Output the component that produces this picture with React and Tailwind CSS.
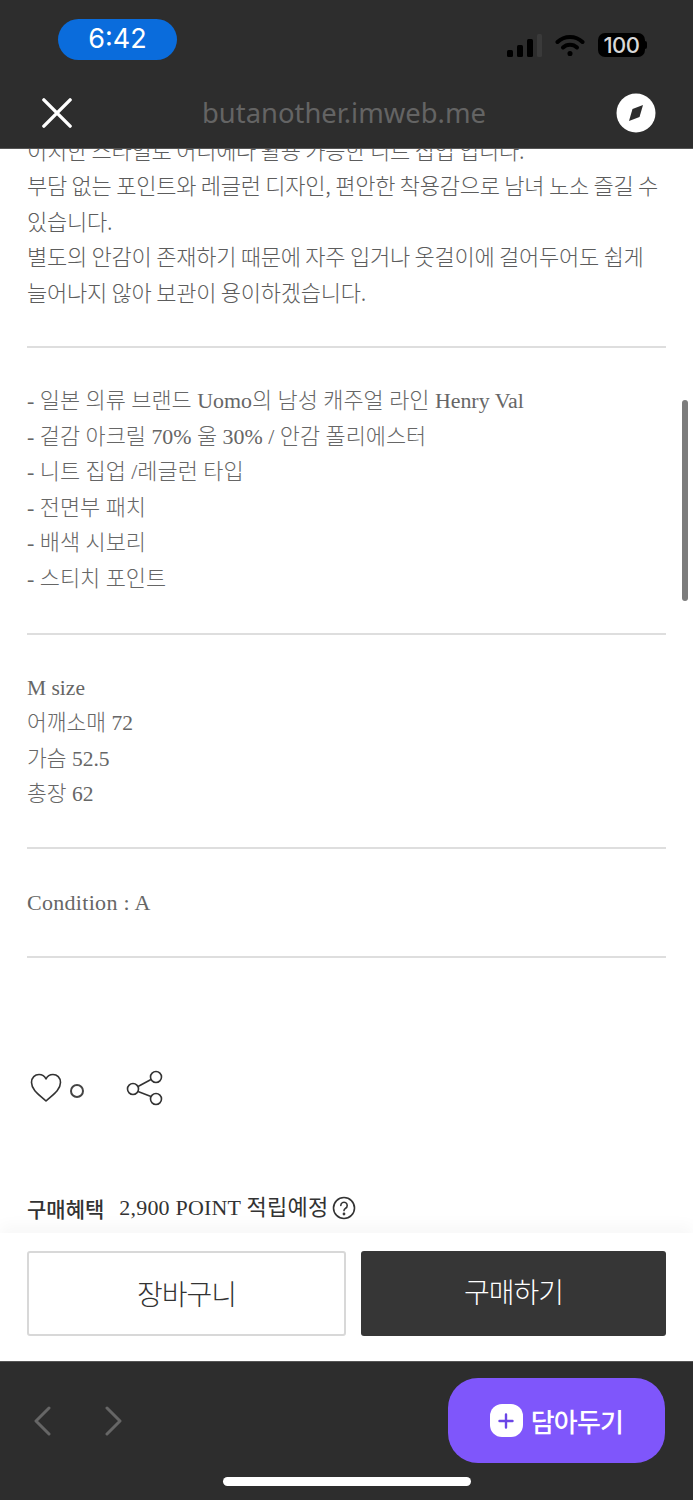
const KR = { fontFamily: '"Noto Sans CJK KR", "Noto Sans", sans-serif' }
const MIXED = { fontFamily: '"Liberation Serif", "Noto Sans CJK KR", serif' }

const INTRO = [
  '이치한 스타일로 어디에나 활용 가능한 니트 집업 입니다.',
  '부담 없는 포인트와 레글런 디자인, 편안한 착용감으로 남녀 노소 즐길 수',
  '있습니다.',
  '별도의 안감이 존재하기 때문에 자주 입거나 옷걸이에 걸어두어도 쉽게',
  '늘어나지 않아 보관이 용이하겠습니다.',
]
const DETAILS = [
  '- 일본 의류 브랜드 Uomo의 남성 캐주얼 라인 Henry Val',
  '- 겉감 아크릴 70% 울 30% / 안감 폴리에스터',
  '- 니트 집업 /레글런 타입',
  '- 전면부 패치',
  '- 배색 시보리',
  '- 스티치 포인트',
]
const SIZES = ['M size', '어깨소매 72', '가슴 52.5', '총장 62']

function StatusBar() {
  return (
    <div className="h-[84px] flex items-start justify-between pl-[58px] pr-[46px] pt-[19px]">
      <div className="w-[119px] h-[41px] rounded-full bg-[#0a6cdc] flex items-center justify-center text-white text-[27px]" style={{ fontFamily: 'Inter, sans-serif' }}>
        6:42
      </div>
      <div className="flex items-center gap-[13px] mt-[14px]">
        <svg width="36" height="24" viewBox="0 0 36 24">
          <rect x="1" y="17" width="6" height="7" rx="1.5" fill="#000" />
          <rect x="11" y="12" width="6" height="12" rx="1.5" fill="#000" />
          <rect x="21" y="6" width="6" height="18" rx="1.5" fill="#000" />
          <rect x="31" y="1" width="5" height="23" rx="1.5" fill="#3a3a3a" />
        </svg>
        <svg width="30" height="24" viewBox="0 0 30 24" fill="none" stroke="#000" strokeWidth="4" strokeLinecap="round">
          <path d="M2.5 9a18 18 0 0 1 25 0" />
          <path d="M8 14.5a10 10 0 0 1 14 0" />
          <circle cx="15" cy="20.5" r="1.8" fill="#000" strokeWidth="1.5" />
        </svg>
        <div className="flex items-center">
          <div className="w-[47px] h-[24px] rounded-[7px] bg-black flex items-center justify-center text-[#d8d8d8] text-[22px] font-medium tracking-[-0.5px]" style={{ fontFamily: 'Inter, sans-serif' }}>
            100
          </div>
          <div className="w-[2px] h-[8px] bg-black rounded-r" />
        </div>
      </div>
    </div>
  )
}

function BrowserBar() {
  return (
    <div className="h-[64px] relative flex items-center justify-between pl-[42px] pr-[37px] pb-[6px]">
      <svg width="30" height="30" viewBox="0 0 32 32" stroke="#fff" strokeWidth="3.6" strokeLinecap="round">
        <path d="M2 2 L30 30 M30 2 L2 30" />
      </svg>
      <span className="text-[#646464] text-[27.4px] leading-[38px]" style={{ fontFamily: '"Noto Sans", sans-serif' }}>butanother.imweb.me</span>
      <svg width="40" height="40" viewBox="0 0 40 40">
        <circle cx="20" cy="20" r="19.5" fill="#fff" />
        <path d="M27 12 L23.5 24 L13 28 L16.5 16 Z" fill="#2d2d2d" />
      </svg>
    </div>
  )
}

function Divider() {
  return <hr className="border-0 h-[2px] bg-[#dedede]" />
}

function ProductBody() {
  return (
    <div className="px-[27px] -mt-[17px] text-[#666]">
      <div className="text-[22px] leading-[35.4px] tracking-[-0.25px] font-light text-[#5c5c5c] whitespace-nowrap" style={KR}>
        {INTRO.map((line) => <p key={line}>{line}</p>)}
      </div>
      <div className="mt-[37px]"><Divider /></div>

      <div className="mt-[35px] text-[21.9px] leading-[35.5px] font-light whitespace-nowrap" style={MIXED}>
        {DETAILS.map((line) => <p key={line}>{line}</p>)}
      </div>
      <div className="mt-[37px]"><Divider /></div>

      <div className="mt-[36px] text-[21.5px] leading-[35.4px] font-light whitespace-nowrap" style={MIXED}>
        {SIZES.map((line) => <p key={line}>{line}</p>)}
      </div>
      <div className="mt-[34px]"><Divider /></div>

      <p className="mt-[36px] text-[22px] leading-[35px] tracking-[0.3px]" style={MIXED}>Condition : A</p>
      <div className="mt-[36px]"><Divider /></div>

      <div className="mt-[111px] flex items-center h-[38px] text-[#333]">
        <svg className="ml-[3px]" width="32" height="30" viewBox="0 0 32 30" fill="none" stroke="#333" strokeWidth="1.6" strokeLinejoin="round">
          <path d="M16 28 C11 23 1.5 17.5 1.5 9.5 C1.5 4.5 5 1.5 9 1.5 C12 1.5 14.6 3 16 6 C17.4 3 20 1.5 23 1.5 C27 1.5 30.5 4.5 30.5 9.5 C30.5 17.5 21 23 16 28 Z" />
        </svg>
        <span className="ml-[8px] mt-[6px] w-[14px] h-[14px] rounded-full border-2 border-[#444]" />
        <svg className="ml-[42px]" width="38" height="36" viewBox="0 0 38 36" fill="none" stroke="#333" strokeWidth="1.6">
          <circle cx="7" cy="19" r="5.5" />
          <circle cx="30" cy="7" r="5.5" />
          <circle cx="30" cy="29" r="5.5" />
          <path d="M12 16.5 L25 9.5 M12 21.5 L25 26.5" />
        </svg>
      </div>

      <div className="mt-[83px] flex items-center text-[#333] whitespace-nowrap">
        <span className="text-[21px] font-medium leading-[36px]" style={KR}>구매혜택</span>
        <span className="ml-[15px] text-[22px] leading-[36px] tracking-[0.2px]" style={MIXED}>2,900 POINT 적립예정</span>
        <svg className="ml-[4px]" width="24" height="24" viewBox="0 0 24 24" fill="none" stroke="#333" strokeWidth="1.6" strokeLinecap="round">
          <circle cx="12" cy="12" r="10.5" />
          <path d="M8.8 9.4a3.2 3.2 0 1 1 4.8 2.8c-1 .6-1.6 1.2-1.6 2.4" />
          <circle cx="12" cy="18" r=".6" fill="#333" />
        </svg>
      </div>
    </div>
  )
}

function BuyBar() {
  return (
    <div className="h-[128px] bg-white flex gap-[15px] px-[27px] pt-[18px] shadow-[0_-8px_14px_rgba(0,0,0,0.03)] relative">
      <button className="w-[319px] h-[85px] bg-white border-2 border-[#d8d8d8] rounded-[3px] text-[#333] text-[28px] font-light tracking-[-1px] pb-[2px]" style={KR}>장바구니</button>
      <button className="w-[305px] h-[85px] bg-[#363636] rounded-[3px] text-white text-[28px] font-light tracking-[-1px] pb-[6px]" style={KR}>구매하기</button>
    </div>
  )
}

function BottomBar() {
  return (
    <div className="h-[139px] bg-[#2d2d2d] border-t border-[#555] relative flex items-start justify-between pl-[33px] pr-[28px] pt-[16px]">
      <div className="flex items-center gap-[50px] h-[85px] text-[#666]">
        <svg width="20" height="30" viewBox="0 0 20 30" fill="none" stroke="#666" strokeWidth="3" strokeLinecap="round" strokeLinejoin="round">
          <path d="M16 2 L3 15 L16 28" />
        </svg>
        <svg width="20" height="30" viewBox="0 0 20 30" fill="none" stroke="#666" strokeWidth="3" strokeLinecap="round" strokeLinejoin="round">
          <path d="M4 2 L17 15 L4 28" />
        </svg>
      </div>
      <div className="w-[217px] h-[85px] rounded-[30px] bg-[#7f56fb] flex items-center justify-center gap-[8px]">
        <span className="w-[33px] h-[33px] rounded-[12px] bg-white flex items-center justify-center">
          <svg width="16" height="16" viewBox="0 0 16 16" stroke="#6b45e6" strokeWidth="2.4" strokeLinecap="round">
            <path d="M8 1.5 V14.5 M1.5 8 H14.5" />
          </svg>
        </span>
        <span className="text-white text-[26px] font-medium tracking-[-0.8px]" style={KR}>담아두기</span>
      </div>
      <div className="absolute left-[223px] bottom-[14px] w-[248px] h-[9px] rounded-full bg-white" />
    </div>
  )
}

export default function App() {
  return (
    <div className="relative w-[693px] h-[1500px] flex flex-col bg-white overflow-hidden">
      <header className="h-[149px] shrink-0 bg-[#2d2d2d] border-b border-[#555] relative z-10">
        <StatusBar />
        <BrowserBar />
      </header>
      <main className="flex-1 overflow-hidden relative">
        <ProductBody />
        <div className="absolute right-[5px] top-[251px] w-[6px] h-[201px] rounded-full bg-[#7c7c7c]" />
      </main>
      <BuyBar />
      <BottomBar />
    </div>
  )
}
